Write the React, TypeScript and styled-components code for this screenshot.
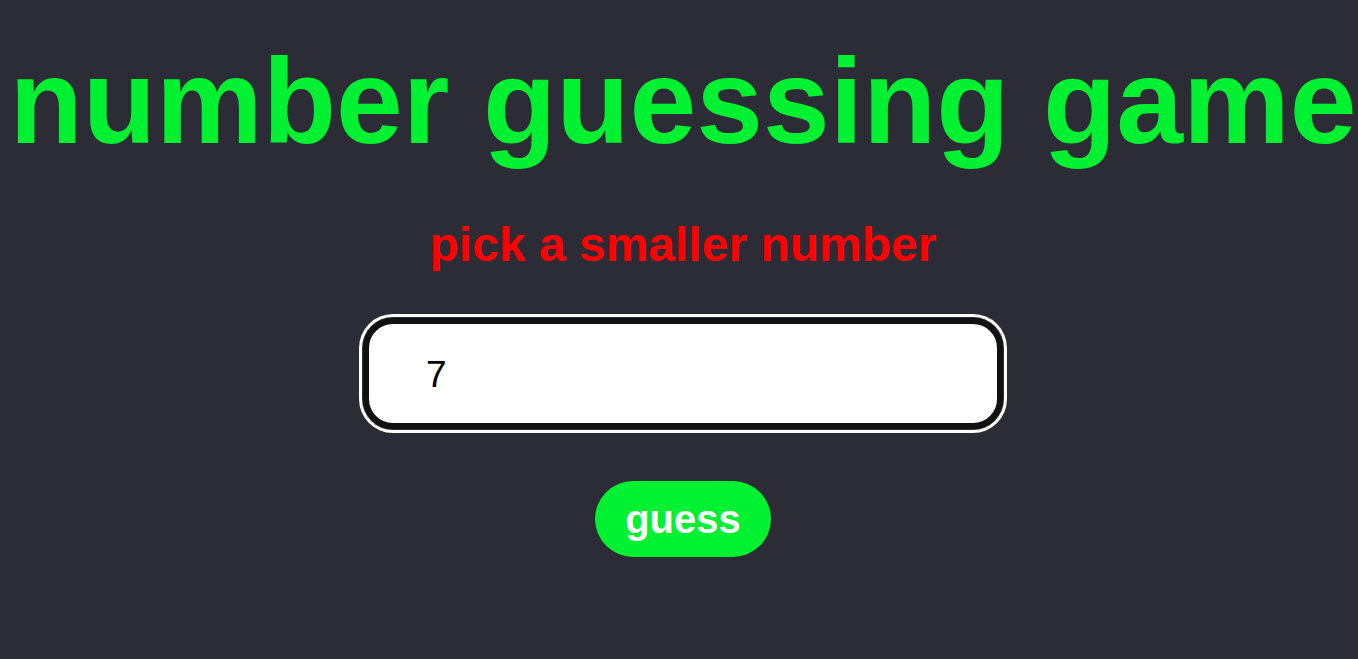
import React, { useState } from "react";
import styled, { createGlobalStyle } from "styled-components";

const GlobalStyle = createGlobalStyle`
  html, body {
    margin: 0;
    padding: 0;
    background: #2c2c36;
    overflow: hidden;
  }
  body {
    font-family: "Liberation Sans", Arial, sans-serif;
  }
`;

const Page = styled.main`
  display: flex;
  flex-direction: column;
  align-items: center;
  box-sizing: border-box;
  width: 100%;
  min-height: 659px;
  padding-left: 8px;
  background: #2c2c36;
  font-family: "Liberation Sans", Arial, sans-serif;
`;

const Title = styled.h1`
  margin: 32px 0 0;
  font-size: 120px;
  font-weight: 700;
  line-height: normal;
  color: #00f032;
  white-space: nowrap;
  text-align: center;
`;

const Hint = styled.p<{ $tone: "low" | "high" | "win" }>`
  margin: 47px 0 0;
  font-size: 48px;
  font-weight: 700;
  line-height: normal;
  color: ${(p) => (p.$tone === "win" ? "#00f032" : "#ff0000")};
`;

const GuessInput = styled.input`
  box-sizing: border-box;
  width: 640px;
  height: 111px;
  margin-top: 46px;
  padding: 2px 0 0 57px;
  border: 6px solid #111111;
  border-radius: 30px;
  background: #ffffff;
  color: #000000;
  caret-color: #000000;
  font-family: "Liberation Sans", Arial, sans-serif;
  font-size: 37px;
  outline: none;
  box-shadow: 0 0 0 1px #2c2c36, 0 0 0 4px #ffffff;
`;

const GuessButton = styled.button`
  margin-top: 52px;
  padding: 15px 30px;
  border: none;
  border-radius: 999px;
  background: #00f032;
  color: #ffffff;
  font-family: "Liberation Sans", Arial, sans-serif;
  font-size: 40px;
  font-weight: 700;
  line-height: 46px;
  cursor: pointer;
`;

export default function App() {
  const [value, setValue] = useState("7");
  return (
    <>
      <GlobalStyle />
      <Page>
        <Title>number guessing game</Title>
        <Hint $tone="high">pick a smaller number</Hint>
        <GuessInput
          autoFocus
          value={value}
          onChange={(e) => setValue(e.target.value)}
        />
        <GuessButton type="button">guess</GuessButton>
      </Page>
    </>
  );
}
